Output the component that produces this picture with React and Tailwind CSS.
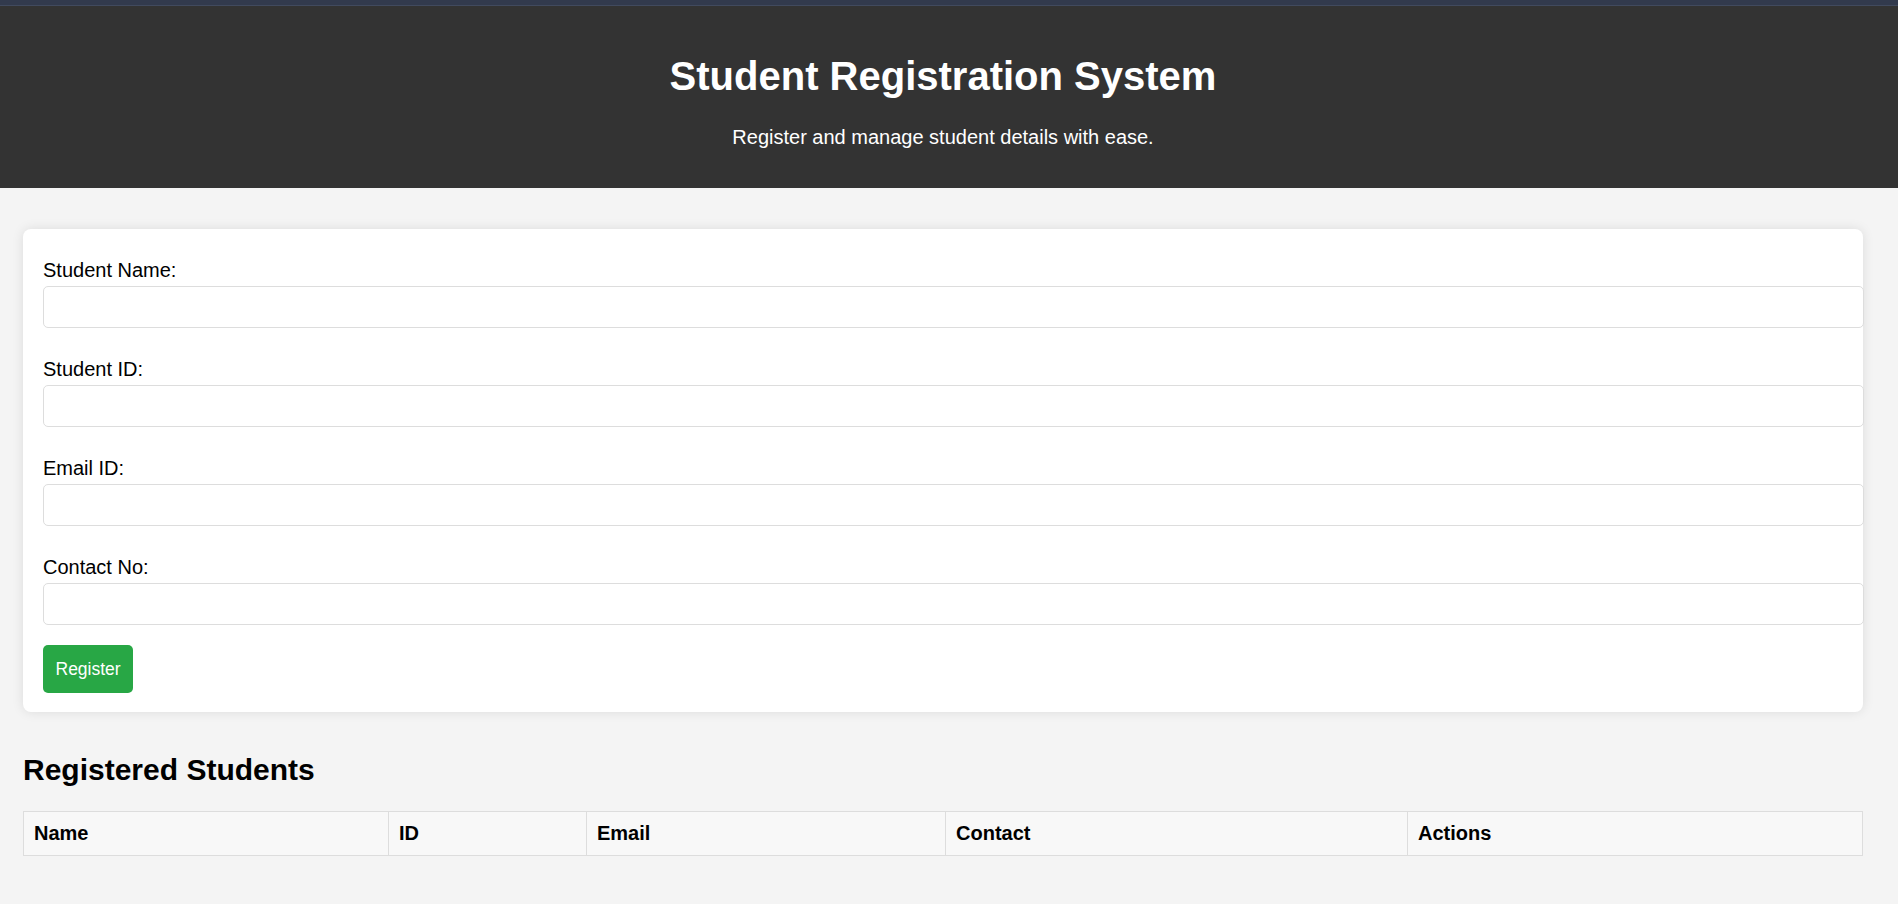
import { useState } from "react";

const fields = [
  { id: "name", label: "Student Name:" },
  { id: "studentId", label: "Student ID:" },
  { id: "email", label: "Email ID:" },
  { id: "contact", label: "Contact No:" },
];

const columns = [
  { label: "Name", width: "w-[365px]" },
  { label: "ID", width: "w-[198px]" },
  { label: "Email", width: "w-[359px]" },
  { label: "Contact", width: "w-[462px]" },
  { label: "Actions", width: "" },
];

export default function App() {
  const [form, setForm] = useState({ name: "", studentId: "", email: "", contact: "" });

  const handleChange = (id, value) => {
    setForm((prev) => ({ ...prev, [id]: value }));
  };

  return (
    <div className="min-h-screen bg-[#f4f4f4] text-black font-['Liberation_Sans',Arial,sans-serif]">
      {/* browser-ish top strip */}
      <div className="h-[6px] bg-[#323a4d] border-b border-[#414a5e]" />

      <header className="bg-[#333333] text-white text-center pt-[48px] pb-[40px] pr-[12px]">
        <h1 className="text-[40px] leading-[45px] font-bold">Student Registration System</h1>
        <p className="mt-[27px] text-[20px] leading-[22px]">Register and manage student details with ease.</p>
      </header>

      <main className="pl-[23px] pr-[35px] pt-[41px] pb-[40px]">
        <form
          className="bg-white rounded-[8px] shadow-[0_0_12px_rgba(0,0,0,0.1)] pt-[30px] px-[20px] pb-[19px]"
          onSubmit={(e) => e.preventDefault()}
        >
          {fields.map((f, i) => (
            <div key={f.id} className={i === fields.length - 1 ? "mb-[20px]" : "mb-[30px]"}>
              <label htmlFor={f.id} className="block text-[20px] leading-[23px] mb-[4px]">
                {f.label}
              </label>
              <input
                id={f.id}
                value={form[f.id]}
                onChange={(e) => handleChange(f.id, e.target.value)}
                className="block w-[calc(100%+21px)] h-[42px] px-[10px] text-[20px] border border-[#dddddd] rounded-[5px] bg-white outline-none"
              />
            </div>
          ))}
          <button
            type="submit"
            className="h-[48px] px-[12.5px] bg-[#28a745] text-white text-[17.5px] leading-[20px] rounded-[5px]"
          >
            Register
          </button>
        </form>

        <h2 className="mt-[41px] text-[30px] leading-[34px] font-bold">Registered Students</h2>

        <table className="mt-[24px] w-full border-collapse">
          <thead>
            <tr className="bg-[#f8f8f8]">
              {columns.map((c) => (
                <th
                  key={c.label}
                  className={`${c.width} border border-[#dddddd] px-[10px] py-[10px] text-left text-[20px] leading-[23px] font-bold`}
                >
                  {c.label}
                </th>
              ))}
            </tr>
          </thead>
          <tbody />
        </table>
      </main>
    </div>
  );
}
